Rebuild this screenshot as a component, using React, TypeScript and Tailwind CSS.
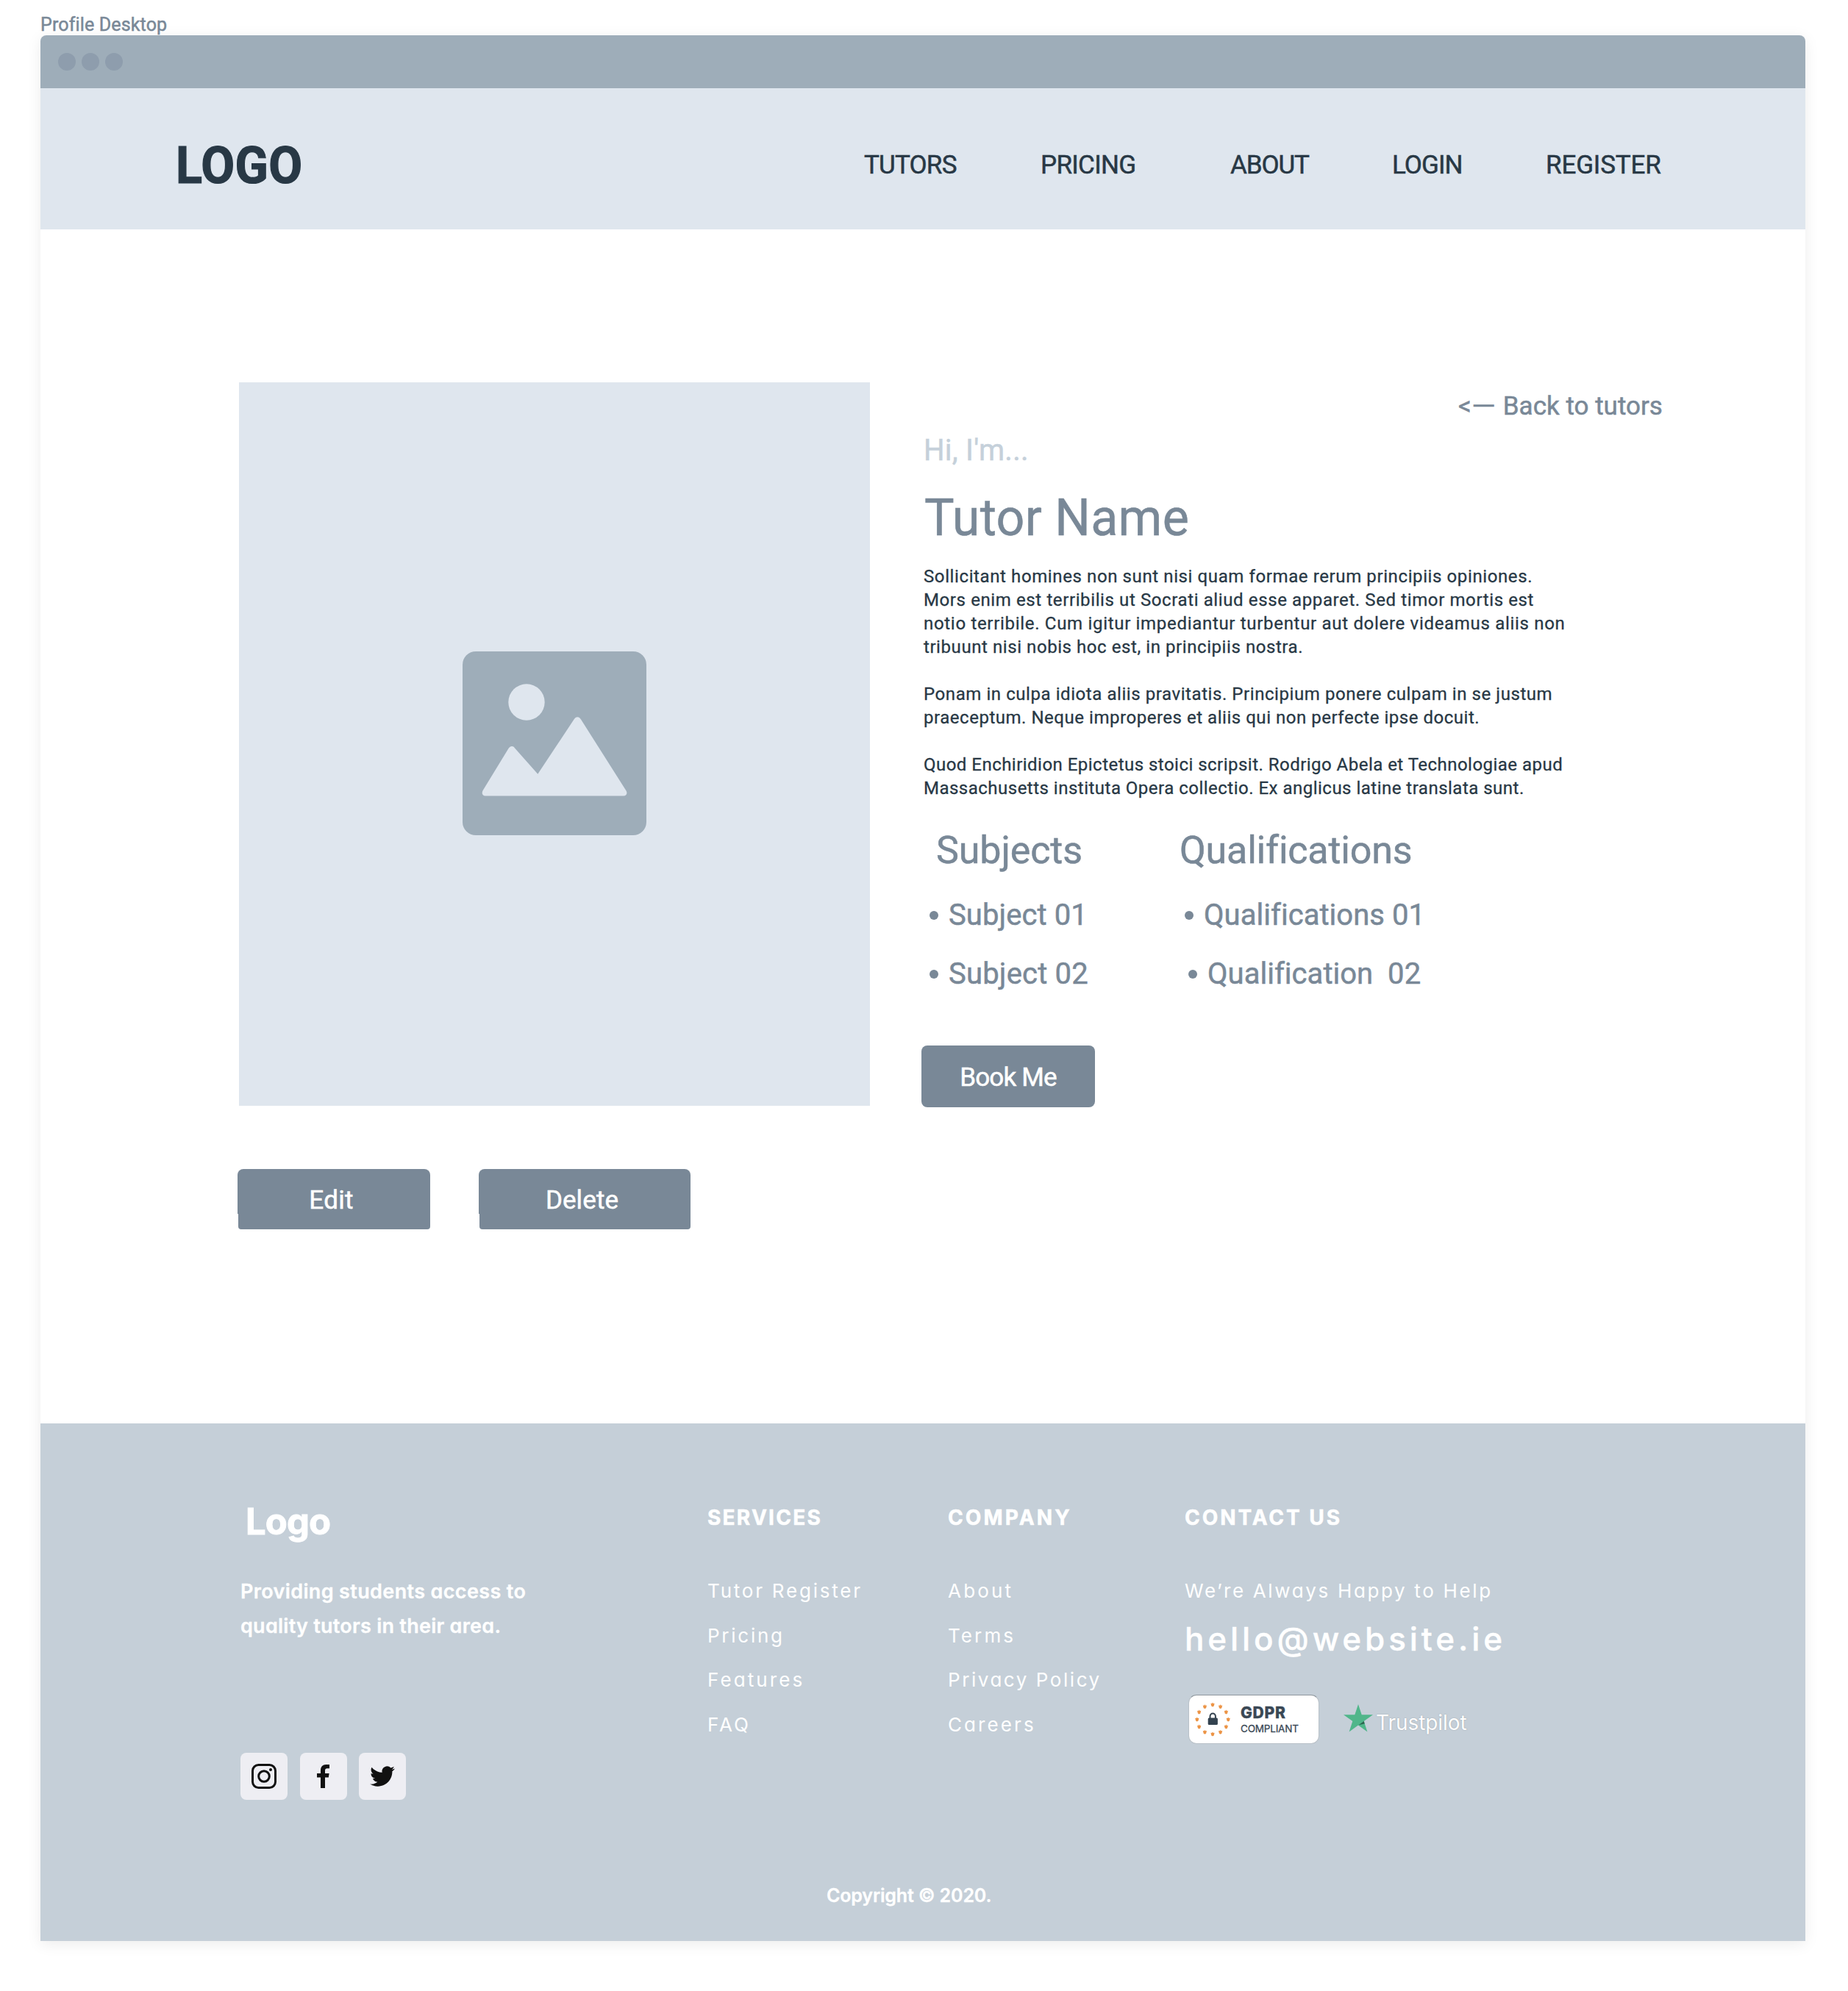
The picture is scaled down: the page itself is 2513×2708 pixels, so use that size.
import React from "react";

const navItems = [
  { label: "TUTORS", className: "w-[240px] tracking-[-0.8px]" },
  { label: "PRICING", className: "w-[258px] tracking-[-0.7px]" },
  { label: "ABOUT", className: "w-[220px] tracking-[-1.1px]" },
  { label: "LOGIN", className: "w-[209px] tracking-[-0.9px]" },
  { label: "REGISTER", className: "w-[160px] tracking-[-0.15px]" },
];

const bio = [
  [
    { text: "Sollicitant homines non sunt nisi quam formae rerum principiis opiniones.", className: "tracking-[0.605px]" },
    { text: "Mors enim est terribilis ut Socrati aliud esse apparet. Sed timor mortis est", className: "tracking-[0.61px]" },
    { text: "notio terribile. Cum igitur impediantur turbentur aut dolere videamus aliis non", className: "tracking-[0.69px]" },
    { text: "tribuunt nisi nobis hoc est, in principiis nostra.", className: "tracking-[0.57px]" },
  ],
  [
    { text: "Ponam in culpa idiota aliis pravitatis. Principium ponere culpam in se justum", className: "tracking-[0.57px]" },
    { text: "praeceptum. Neque improperes et aliis qui non perfecte ipse docuit.", className: "tracking-[0.53px]" },
  ],
  [
    { text: "Quod Enchiridion Epictetus stoici scripsit. Rodrigo Abela et Technologiae apud", className: "tracking-[0.475px]" },
    { text: "Massachusetts instituta Opera collectio. Ex anglicus latine translata sunt.", className: "tracking-[0.49px]" },
  ],
];

const services = [
  { label: "Tutor Register", className: "tracking-[2.78px]" },
  { label: "Pricing", className: "tracking-[2.75px]" },
  { label: "Features", className: "tracking-[3.1px]" },
  { label: "FAQ", className: "tracking-[3px]" },
];

const company = [
  { label: "About", className: "tracking-[3.2px]" },
  { label: "Terms", className: "tracking-[3.1px]" },
  { label: "Privacy Policy", className: "tracking-[2.55px]" },
  { label: "Careers", className: "tracking-[3.1px]" },
];

function TitleBar() {
  return (
    <div className="flex h-[72px] items-center gap-2 rounded-t-[8px] bg-[#9eadb9] pl-6">
      <span className="size-6 rounded-full bg-[#8e9dad]" />
      <span className="size-6 rounded-full bg-[#8e9dad]" />
      <span className="size-6 rounded-full bg-[#8e9dad]" />
    </div>
  );
}

function NavBar() {
  return (
    <header className="flex h-[192px] items-center bg-[#dfe6ee] pt-[17px] text-[#283845]">
      <div className="w-[1120px] pl-[184px] text-[70px] leading-[80px] font-bold [-webkit-text-stroke:1.2px]">
        <span className="inline-block origin-left scale-x-[0.95] tracking-[0.4px]">LOGO</span>
      </div>
      <nav className="flex pt-px text-[35px] leading-[40px]">
        {navItems.map((item) => (
          <a key={item.label} className={item.className}>
            {item.label}
          </a>
        ))}
      </nav>
    </header>
  );
}

function PictureIcon() {
  return (
    <svg viewBox="0 0 250 250" className="size-[250px]">
      <rect width="250" height="250" rx="18" fill="#9eadb9" />
      <circle cx="87" cy="69" r="24.7" fill="#dfe6ee" />
      <path
        fill="#dfe6ee"
        d="M31 196.5H219C223 196.5 224.500 193 222.500 189.500L161 92.500C158.500 88 154 88 151.500 92.500L102.300 166.700L71 131.500C68.500 128 65 128.500 62.500 132L27.700 189C25.500 193 27 196.500 31 196.500Z"
      />
    </svg>
  );
}

function Bullet() {
  return <span className="size-[12px] shrink-0 rounded-full bg-[#798897]" />;
}

function ActionButton({ label, className }: { label: string; className: string }) {
  return (
    <button className={"relative h-[82px] pt-[4px] pr-[7px] text-center text-[35px] leading-[78px] text-white " + className}>
      <span className="absolute inset-x-0 top-0 h-[61px] rounded-t-[8px] bg-[#798897]" />
      <span className="absolute right-[0.5px] bottom-0 left-px h-[22px] rounded-b-[4px] bg-[#798897]" />
      <span className="relative">{label}</span>
    </button>
  );
}

function Profile() {
  return (
    <main className="h-[1624px] bg-white pt-[208px] pl-[270px]">
      <div className="flex gap-[73px]">
        <div className="flex h-[984px] w-[858px] items-center justify-center bg-[#dfe6ee] pb-0.5">
          <PictureIcon />
        </div>
        <div className="w-[1040px] text-[#798897]">
          <a className="block h-[64px] pt-[2px] pl-[727px] text-[35px] leading-[62px] whitespace-nowrap">
            &lt;<span className="mr-[7px] inline-block origin-left scale-x-[1.2]">—</span> Back to tutors
          </a>
          <p className="text-[40px] leading-[57px] tracking-[0.25px] text-[#c5d0da]">Hi, I'm...</p>
          <h1 className="pl-px text-[71px] leading-[125px]">
            <span className="inline-block origin-left scale-x-[0.96] tracking-[0.3px]">Tutor Name</span>
          </h1>
          <div className="flex h-[343px] flex-col gap-8 pt-[2px] text-[24px] leading-[32px] whitespace-nowrap text-[#283845] [-webkit-text-stroke:0.3px]">
            {bio.map((lines) => (
              <p key={lines[0].text}>
                {lines.map((line) => (
                  <span key={line.text} className={"block " + line.className}>
                    {line.text}
                  </span>
                ))}
              </p>
            ))}
          </div>
          <div className="flex text-[40px] leading-[80px] whitespace-pre">
            <section className="w-[348px]">
              <h2 className="pl-[17px] text-[52px] leading-[96px] tracking-[-0.1px]">Subjects</h2>
              <ul className="pl-[8px]">
                <li className="flex items-center gap-[14px] tracking-[0.1px]">
                  <Bullet />
                  Subject 01
                </li>
                <li className="flex items-center gap-[14px] tracking-[0.2px]">
                  <Bullet />
                  Subject 02
                </li>
              </ul>
            </section>
            <section>
              <h2 className="text-[52px] leading-[96px] tracking-[-0.2px]">Qualifications</h2>
              <ul className="pl-[7px]">
                <li className="flex items-center gap-[14px] tracking-[0.04px]">
                  <Bullet />
                  Qualifications 01
                </li>
                <li className="flex items-center gap-[14px] pl-[5px] tracking-[0.03px]">
                  <Bullet />
                  {"Qualification  02"}
                </li>
              </ul>
            </section>
          </div>
          <button className="mt-[57px] -ml-[3px] h-[84px] w-[236px] rounded-[8px] bg-[#798897] pt-[3px] text-[35px] leading-[80px] tracking-[-0.83px] text-white">
            Book Me
          </button>
        </div>
      </div>
      <div className="mt-[84px] -ml-[2px] flex gap-[66px]">
        <ActionButton label="Edit" className="w-[262px] tracking-[0.3px]" />
        <ActionButton label="Delete" className="w-[288px] tracking-[0.1px]" />
      </div>
    </main>
  );
}

function SocialIcons() {
  return (
    <div className="mt-[149px] flex gap-[16.500px]">
      <span className="flex size-16 items-center justify-center rounded-[8px] bg-[#eeeef3]">
        <svg viewBox="0 0 34 34" className="size-[34px]" fill="none" stroke="#111">
          <rect x="1.500" y="1.500" width="31" height="31" rx="8" strokeWidth="3" />
          <circle cx="17" cy="17" r="7.300" strokeWidth="3" />
          <circle cx="26" cy="8" r="2" fill="#111" stroke="none" />
        </svg>
      </span>
      <span className="flex size-16 items-center justify-center rounded-[8px] bg-[#eeeef3]">
        <svg viewBox="0 0 17 32" className="h-[32px] w-[17px]" fill="#111">
          <path d="M5 32V17.500H0V12H5V8C5 2.800 8 0 12.300 0H17V5.200H14C11.500 5.200 11 6.500 11 8.300V12H16.600L15.800 17.500H11V32Z" />
        </svg>
      </span>
      <span className="flex size-16 items-center justify-center rounded-[8px] bg-[#eeeef3]">
        <svg viewBox="0 2 24 20" className="h-[28px] w-[34px]" fill="#111">
          <path d="M23.953 4.570a10 10 0 01-2.825.775 4.958 4.958 0 002.163-2.723c-.951.555-2.005.959-3.127 1.184a4.920 4.920 0 00-8.384 4.482C7.690 8.095 4.067 6.130 1.640 3.162a4.822 4.822 0 00-.666 2.475c0 1.710.870 3.213 2.188 4.096a4.904 4.904 0 01-2.228-.616v.060a4.923 4.923 0 003.946 4.827 4.996 4.996 0 01-2.212.085 4.936 4.936 0 004.604 3.417 9.867 9.867 0 01-6.102 2.105c-.390 0-.779-.023-1.170-.067a13.995 13.995 0 007.557 2.209c9.053 0 13.998-7.496 13.998-13.985 0-.210 0-.420-.015-.630A9.935 9.935 0 0024 4.590z" />
        </svg>
      </span>
    </div>
  );
}

function GdprBadge() {
  const marks = Array.from({ length: 12 }, (_, i) => {
    const angle = (i * Math.PI) / 6;
    return { x: 22 + 21.2 * Math.sin(angle), y: 22 - 20 * Math.cos(angle) };
  });
  return (
    <div className="flex h-[67px] w-[178px] items-center rounded-[11px] border border-[#b9c1c8] border-t-[#8f979e] bg-white pl-[10px]">
      <svg viewBox="0 0 44 46" className="h-[46px] w-[44px] overflow-visible">
        {marks.map((mark) => (
          <path
            key={mark.x + "," + mark.y}
            transform={`translate(${mark.x} ${mark.y + 1.500})`}
            d="M-2.600 -1.800L-0.900 -1.500L0 -2.900L0.900 -1.500L2.600 -1.800L1.700 2L0 2.900L-1.700 2Z"
            fill="#ec9446"
          />
        ))}
        <path d="M18.500 23V19.500A3.700 4 0 0 1 25.900 19.500V23" fill="none" stroke="#33424f" strokeWidth="2" />
        <rect x="15.700" y="21.500" width="13.200" height="9.500" rx="1.500" fill="#33424f" />
      </svg>
      <div className="pt-[2px] pl-[16px] text-[#3a4855]">
        <div className="text-[21px] leading-[24px] font-extrabold tracking-[0.8px] [-webkit-text-stroke:0.4px]">GDPR</div>
        <div className="text-[13.500px] leading-[18px] tracking-[-0.2px] [-webkit-text-stroke:0.3px]">COMPLIANT</div>
      </div>
    </div>
  );
}

function Trustpilot() {
  return (
    <div className="ml-[33px] flex h-[67px] items-start">
      <svg viewBox="0 0 40 38" className="mt-[13px] h-[38px] w-[40px]">
        <path d="M20 0L24.700 14.300H40L27.700 23.100L32.400 37.500L20 28.600L7.600 37.500L12.300 23.100L0 14.300H15.300Z" fill="#50b68a" />
        <path d="M28.700 26.500L27.700 23.100L20.500 28.200Z" fill="#2c6650" />
      </svg>
      <span className="ml-[4px] pt-[18px] text-[28px] leading-[40px] tracking-[-0.05px] [text-shadow:0_0_1.500px_#8f989f]">
        Trustpilot
      </span>
    </div>
  );
}

function LinkColumn({
  title,
  titleClass,
  className,
  items,
}: {
  title: string;
  titleClass: string;
  className: string;
  items: { label: string; className: string }[];
}) {
  return (
    <section className={className}>
      <h3 className={"text-[28px] leading-[48px] font-bold [-webkit-text-stroke:0.5px] " + titleClass}>{title}</h3>
      <ul className="mt-[46px] text-[26px] leading-[60.500px]">
        {items.map((item) => (
          <li key={item.label} className={item.className}>
            {item.label}
          </li>
        ))}
      </ul>
    </section>
  );
}

function Footer() {
  return (
    <footer className="h-[704px] bg-[#c5cfd8] font-['Inter',sans-serif] text-white [-webkit-text-stroke:0px] [font-feature-settings:'cv11']">
      <div className="flex h-[604px] pt-[104px] pl-[272px] whitespace-nowrap">
        <div className="w-[635px]">
          <div className="pt-[2px] pl-[7px] text-[49px] leading-[56px] font-bold tracking-[-0.9px] [-webkit-text-stroke:0.9px]">
            Logo
          </div>
          <p className="mt-[43px] text-[27px] leading-[47px] font-semibold [-webkit-text-stroke:0.3px]">
            <span className="block tracking-[0.36px]">Providing students access to</span>
            <span className="block tracking-[0.26px]">quality tutors in their area.</span>
          </p>
          <SocialIcons />
        </div>
        <LinkColumn title="SERVICES" titleClass="tracking-[2.25px]" className="w-[327px]" items={services} />
        <LinkColumn title="COMPANY" titleClass="tracking-[3.15px]" className="w-[322px]" items={company} />
        <section>
          <h3 className="text-[28px] leading-[48px] font-bold tracking-[2.95px] [-webkit-text-stroke:0.5px]">CONTACT US</h3>
          <p className="mt-[46px] text-[26px] leading-[60.500px] tracking-[2.65px]">We’re Always Happy to Help</p>
          <p className="text-[44px] leading-[68px] font-medium tracking-[4.9px] [-webkit-text-stroke:0.4px]">
            hello@website.ie
          </p>
          <div className="mt-[42px] flex pl-[5px]">
            <GdprBadge />
            <Trustpilot />
          </div>
        </section>
      </div>
      <p className="pl-[1069px] text-[25px] leading-[76px] font-semibold tracking-[-0.15px] [-webkit-text-stroke:0.3px]">
        Copyright © 2020.
      </p>
    </footer>
  );
}

export default function App() {
  return (
    <div className="h-[2708px] w-[2513px] overflow-hidden bg-white pl-[55px] font-['Roboto',sans-serif] [-webkit-text-stroke:0.5px]">
      <div className="h-12 pt-[19px] text-[25px] leading-[30px] tracking-[0.15px] text-[#798897]">Profile Desktop</div>
      <div className="w-[2400px] rounded-t-[8px] shadow-[0_4px_20px_rgba(0,0,0,0.08)]">
        <TitleBar />
        <NavBar />
        <Profile />
        <Footer />
      </div>
    </div>
  );
}
